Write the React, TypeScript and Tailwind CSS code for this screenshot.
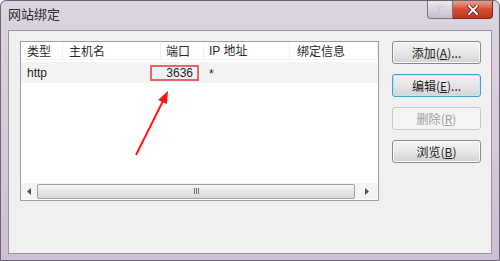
import React from "react";

const cjk = { fontFamily: '"Noto Sans CJK SC", "Noto Sans", sans-serif' };

function Btn({ label, hot, focused, disabled }: { label: string; hot: string; focused?: boolean; disabled?: boolean }) {
  const [pre, post] = label.split("|");
  return (
    <div
      className={
        "w-[89px] h-[23px] rounded-[3px] flex items-center justify-center text-[12px] " +
        (disabled
          ? "border border-[#c8c8c8] bg-[#f4f4f4] text-[#a0a0a0]"
          : focused
          ? "border border-[#3c9fd6] bg-gradient-to-b from-[#f2f2f2] via-[#e6e6e6] to-[#d4d4d4] text-[#1a1a1a] shadow-[inset_0_0_0_1px_#bfe6fb]"
          : "border border-[#8a8a8a] bg-gradient-to-b from-[#f4f4f4] via-[#e8e8e8] to-[#d2d2d2] text-[#1a1a1a] shadow-[inset_0_0_0_1px_#fbfbfb]")
      }
      style={cjk}
    >
      <span>
        {pre}(<span className="underline">{hot}</span>){post}
      </span>
    </div>
  );
}

export default function App() {
  return (
    <div className="relative w-[500px] h-[261px] overflow-hidden bg-gradient-to-b from-[#dcd4e0] via-[#d6cadb] to-[#cdbfd4] border border-[#6d6471] rounded-t-[6px]">
      {/* title bar */}
      <div className="h-[29px] flex items-start justify-between pl-[7px] pr-[6px]">
        <div className="mt-[5px] text-[13px] text-[#2a2a2a] leading-[16px]" style={cjk}>
          网站绑定
        </div>
        <div className="flex">
          <div className="w-[26px] h-[18px] border border-[#7a7480] border-t-0 rounded-bl-[4px] bg-gradient-to-b from-[#ede9f0] to-[#c6bfcc] flex items-center justify-center text-[11px] font-bold text-[#f6f6f6] [text-shadow:0_0_1px_#555]" style={{ fontFamily: '"Liberation Sans", sans-serif' }}>
            ?
          </div>
          <div className="w-[40px] h-[18px] border border-[#6e2a22] border-t-0 border-l-0 rounded-br-[4px] bg-gradient-to-b from-[#e8a08e] via-[#d44c33] to-[#c2341e] flex items-center justify-center">
            <svg width="12" height="10" viewBox="0 0 12 10">
              <path d="M2 1 L10 9 M10 1 L2 9" stroke="#5a1a12" strokeWidth="3.4" strokeLinecap="square" />
              <path d="M2 1 L10 9 M10 1 L2 9" stroke="#ffffff" strokeWidth="2" strokeLinecap="square" />
            </svg>
          </div>
        </div>
      </div>
      {/* client area */}
      <div className="mx-[7px] h-[224px] bg-[#f0f0f0] border border-[#9c92a2] flex pl-[11px] pt-[10px] gap-[13px]">
        {/* list view */}
        <div className="relative w-[359px] h-[160px] border border-[#9a9ea4] bg-white flex flex-col">
          <div className="h-[18px] flex text-[12px] text-[#2a2a2a] leading-[18px] border-b border-[#f2f3f5]" style={cjk}>
            <div className="w-[42px] pl-[6px] border-r border-[#f0f1f3]">类型</div>
            <div className="w-[98px] pl-[6px] border-r border-[#f0f1f3]">主机名</div>
            <div className="w-[43px] pl-[5px] border-r border-[#f0f1f3]">端口</div>
            <div className="w-[86px] pl-[5px] border-r border-[#f0f1f3]" style={{ fontFamily: '"Liberation Sans", "Noto Sans CJK SC", sans-serif' }}>
              IP 地址
            </div>
            <div className="flex-1 pl-[7px] border-r border-[#f0f1f3]">绑定信息</div>
          </div>
          <div className="mt-[2px] h-[21px] flex items-center bg-[#f3f3f3] text-[12px] text-[#1e1e1e]" style={{ fontFamily: '"Liberation Sans", sans-serif' }}>
            <div className="w-[42px] pl-[6px]">http</div>
            <div className="w-[98px]" />
            <div className="w-[43px] flex justify-end pr-[11px]">3636</div>
            <div className="pl-[5px] pt-[3px]">*</div>
          </div>
          <div className="flex-1" />
          {/* scrollbar */}
          <div className="h-[16px] mb-[1px] flex items-center bg-[#f4f4f4]">
            <div className="w-[16px] flex justify-center">
              <svg width="4" height="7" viewBox="0 0 4 7"><path d="M4 0 L0 3.5 L4 7 Z" fill="#505050" /></svg>
            </div>
            <div className="w-[318px] h-[15px] border border-[#a0a0a0] rounded-[2px] bg-gradient-to-b from-[#f6f6f6] to-[#d8d8d8] flex items-center justify-center">
              <div className="flex gap-[1px]">
                <div className="w-[1px] h-[6px] bg-[#707070]" />
                <div className="w-[1px] h-[6px] bg-[#707070]" />
                <div className="w-[1px] h-[6px] bg-[#707070]" />
              </div>
            </div>
            <div className="flex-1 flex justify-center">
              <svg width="4" height="7" viewBox="0 0 4 7"><path d="M0 0 L4 3.5 L0 7 Z" fill="#505050" /></svg>
            </div>
          </div>
          {/* annotation box */}
          <div className="absolute left-[129px] top-[23px] w-[49px] h-[16px] border-2 border-[#e8646a]" />
          {/* arrow */}
          <svg className="absolute left-0 top-0" width="359" height="160" viewBox="0 0 359 160">
            <line x1="115" y1="113" x2="142" y2="59" stroke="#ff1414" strokeWidth="2" />
            <path d="M147 49 L137 58 L146 62 Z" fill="#ff1414" />
          </svg>
        </div>
        {/* buttons */}
        <div className="flex flex-col gap-[10px]">
          <Btn label="添加|..." hot="A" />
          <Btn label="编辑|..." hot="E" focused />
          <Btn label="删除|" hot="R" disabled />
          <Btn label="浏览|" hot="B" />
        </div>
      </div>
    </div>
  );
}
